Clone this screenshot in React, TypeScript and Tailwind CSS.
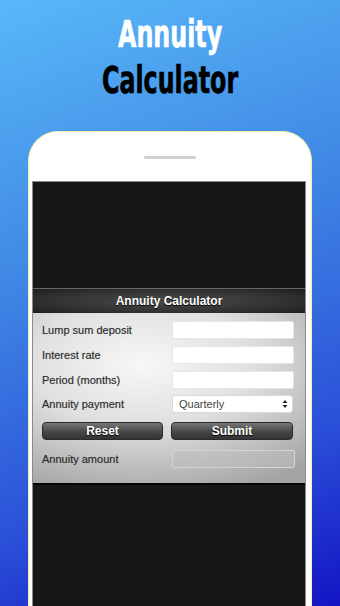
import React from "react";

const label = "text-[11px] text-[#2a2a2a] [text-shadow:0_0_1px_rgba(0,0,0,0.25)]";

function Row({ text, children, top }: { text: string; children: React.ReactNode; top: string }) {
  return (
    <div className={`flex items-center h-[18px] ${top}`}>
      <div className={`w-[130px] ${label}`}>{text}</div>
      {children}
    </div>
  );
}

export default function App() {
  return (
    <div
      className="w-[340px] h-[606px] overflow-hidden flex flex-col items-center bg-[linear-gradient(160deg,#58b8f8_0%,#3f86e4_40%,#2a4fd8_75%,#1414c4_100%)]"
      style={{ fontFamily: '"Liberation Sans", Arial, sans-serif' }}
    >
      <div
        className="mt-[11px] mb-[3px] h-[92px] flex flex-col items-center justify-center font-bold text-[33px] leading-[40px] scale-x-[0.8] scale-y-[1.15] [-webkit-text-stroke:0.6px_currentColor]"
        style={{ fontFamily: '"DejaVu Sans Condensed", "Liberation Sans Narrow", sans-serif' }}
      >
        <div className="text-white">Annuity</div>
        <div className="text-black">Calculator</div>
      </div>
      <div className="mt-[25px] w-[284px] flex-1 bg-white rounded-t-[30px] border border-b-0 border-[#f3f1a8] flex flex-col items-center">
        <div className="mt-[24px] w-[52px] h-[3px] rounded-full bg-[#cfcfcf]" />
        <div className="mt-[22px] w-[274px] ml-[-2px] flex-1 bg-[#171717] border-t border-x border-[#8a8a8a] flex flex-col">
          <div className="h-[106px]" />
          <div className="h-[25px] flex items-center justify-center bg-[radial-gradient(ellipse_at_center,#4a4a4a_0%,#333_60%,#1e1e1e_100%)] border-t border-[#666]">
            <span className="text-white font-bold text-[12px] [text-shadow:0_1px_1px_#000]">Annuity Calculator</span>
          </div>
          <div className="pl-[9px] pr-[10px] pt-[8px] pb-[15px] bg-[radial-gradient(ellipse_90%_80%_at_40%_30%,#f7f7f7_0%,#e0e0e0_45%,#a4a4a4_100%)] border-b-2 border-[#050505]">
            <Row text="Lump sum deposit" top="">
              <div className="w-[122px] h-[18px] bg-white rounded-[2px] border border-[#e6e6e6]" />
            </Row>
            <Row text="Interest rate" top="mt-[7px]">
              <div className="w-[122px] h-[18px] bg-white rounded-[2px] border border-[#e6e6e6]" />
            </Row>
            <Row text="Period (months)" top="mt-[7px]">
              <div className="w-[122px] h-[18px] bg-white rounded-[2px] border border-[#e6e6e6]" />
            </Row>
            <Row text="Annuity payment" top="mt-[6px]">
              <div className="w-[121px] h-[18px] bg-white rounded-[3px] border border-[#d8d8d8] flex items-center justify-between pl-[6px] pr-[4px]">
                <span className="text-[11px] text-[#444]">Quarterly</span>
                <svg width="6" height="10" viewBox="0 0 6 10">
                  <path d="M0.5 4 L3 1 L5.5 4 Z" fill="#222" />
                  <path d="M0.5 6 L3 9 L5.5 6 Z" fill="#222" />
                </svg>
              </div>
            </Row>
            <div className="flex h-[18px] mt-[9px] gap-[8px]">
              <div className="w-[121px] h-[18px] rounded-[4px] border border-[#2a2a2a] bg-[linear-gradient(to_bottom,#777_0%,#4a4a4a_50%,#333_100%)] flex items-center justify-center text-white font-bold text-[12px] [text-shadow:0_1px_1px_#000]">
                Reset
              </div>
              <div className="w-[122px] h-[18px] rounded-[4px] border border-[#2a2a2a] bg-[linear-gradient(to_bottom,#777_0%,#4a4a4a_50%,#333_100%)] flex items-center justify-center text-white font-bold text-[12px] [text-shadow:0_1px_1px_#000]">
                Submit
              </div>
            </div>
            <Row text="Annuity amount" top="mt-[10px]">
              <div className="w-[123px] h-[18px] rounded-[2px] border border-[#d4d4d4] bg-[#bdbdbd]/50" />
            </Row>
          </div>
          <div className="flex-1" />
        </div>
      </div>
    </div>
  );
}
